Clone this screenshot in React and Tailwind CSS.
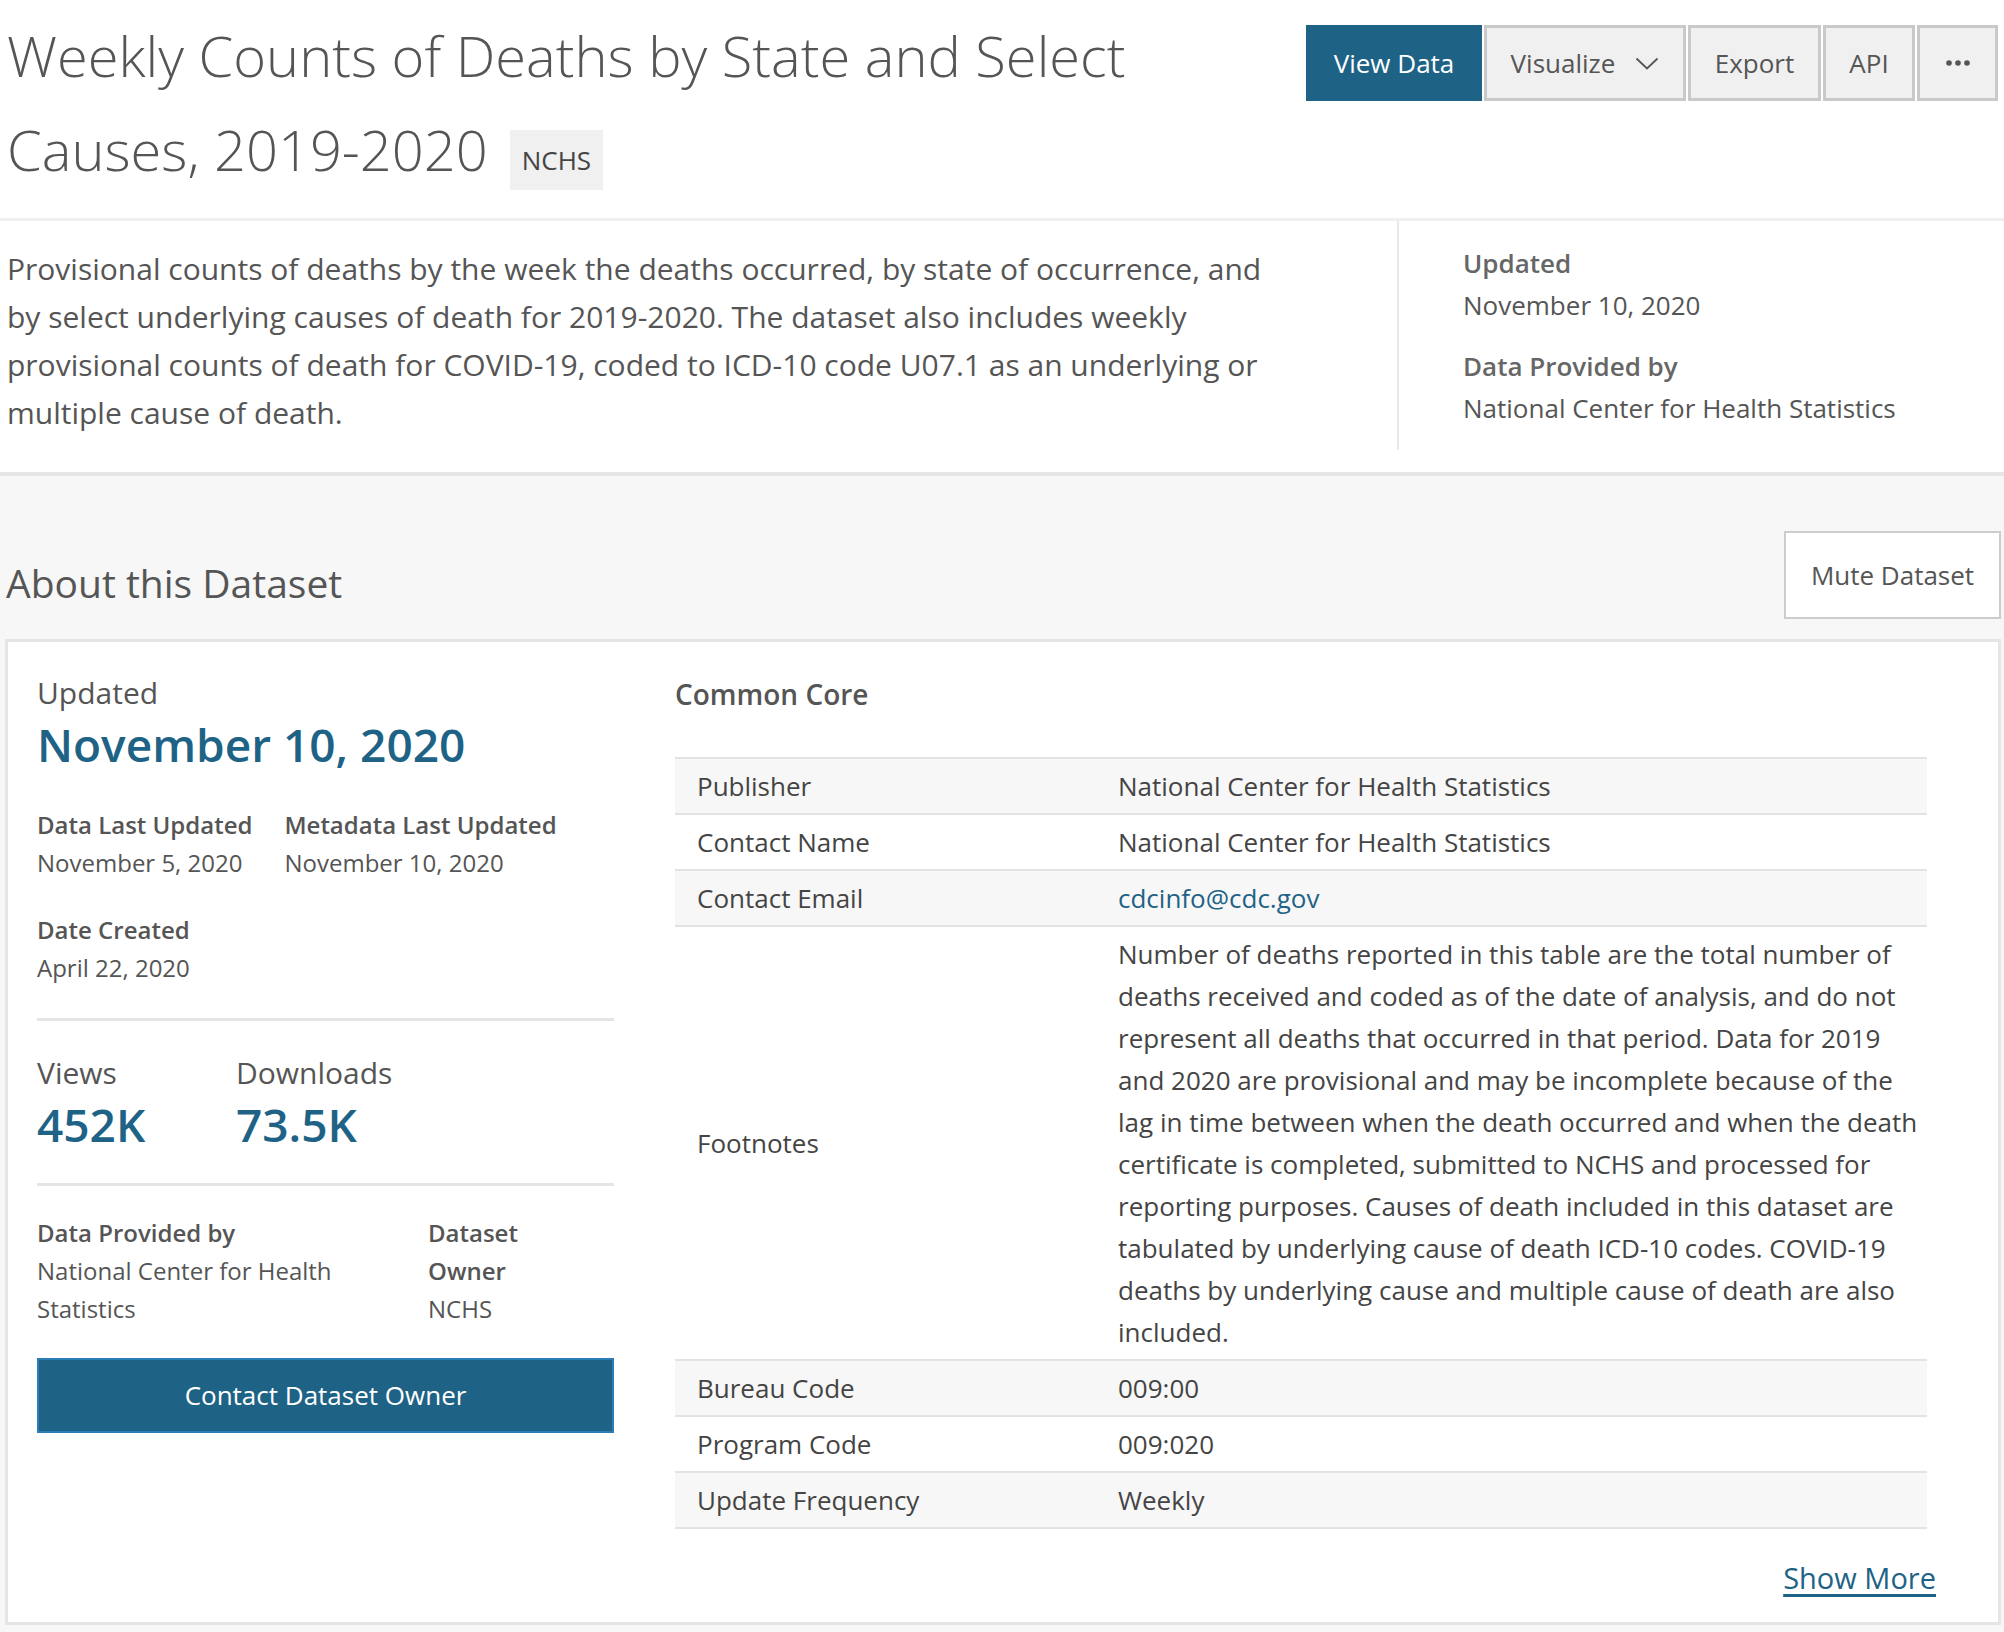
const footnote =
  'Number of deaths reported in this table are the total number of deaths received and coded as of the date of analysis, and do not represent all deaths that occurred in that period. Data for 2019 and 2020 are provisional and may be incomplete because of the lag in time between when the death occurred and when the death certificate is completed, submitted to NCHS and processed for reporting purposes. Causes of death included in this dataset are tabulated by underlying cause of death ICD-10 codes. COVID-19 deaths by underlying cause and multiple cause of death are also included.'

const rows = [
  ['Publisher', 'National Center for Health Statistics'],
  ['Contact Name', 'National Center for Health Statistics'],
  ['Contact Email', <a key="mail" className="text-[#1e6386]">cdcinfo@cdc.gov</a>],
  ['Footnotes', footnote],
  ['Bureau Code', '009:00'],
  ['Program Code', '009:020'],
  ['Update Frequency', 'Weekly'],
]

function Chevron() {
  return (
    <svg width="24" height="13" viewBox="0 0 24 13" fill="none">
      <polyline points="1.5,1.5 12,11.5 22.5,1.5" stroke="#555" strokeWidth="1.8" />
    </svg>
  )
}

function Dots() {
  return (
    <svg width="26" height="6" viewBox="0 0 26 6" fill="#555">
      <circle cx="4" cy="3" r="2.8" />
      <circle cx="13" cy="3" r="2.8" />
      <circle cx="22" cy="3" r="2.8" />
    </svg>
  )
}

export default function App() {
  return (
    <div className="min-h-screen bg-white font-['Open_Sans',sans-serif] text-[#555]">
      {/* title bar */}
      <header className="flex justify-between border-b-[3px] border-[#efefef] pl-[7px] pr-[6px] pt-[8px] pb-[22px]">
        <h1 className="max-w-[1250px] text-[56px] font-light leading-[94px]">
          Weekly Counts of Deaths by State and Select Causes, 2019-2020
          <span className="ml-[22px] inline-block h-[60px] bg-[#f0f0f0] px-[12px] align-[1px] text-[26px] font-normal leading-[60px] text-[#444]">
            NCHS
          </span>
        </h1>
        <div className="mt-[17px] flex h-[76px] shrink-0 gap-[2px] text-[26px]">
          <button className="w-[176px] bg-[#1e6386] text-white">View Data</button>
          <button className="flex w-[202px] items-center justify-center gap-[20px] border-[3px] border-[#c9c9c9] bg-[#f0f0f0]">
            Visualize <Chevron />
          </button>
          <button className="w-[133px] border-[3px] border-[#c9c9c9] bg-[#f0f0f0]">Export</button>
          <button className="w-[92px] border-[3px] border-[#c9c9c9] bg-[#f0f0f0]">API</button>
          <button className="flex w-[81px] items-center justify-center border-[3px] border-[#c9c9c9] bg-[#f0f0f0]">
            <Dots />
          </button>
        </div>
      </header>

      {/* description */}
      <section className="flex border-b-[4px] border-[#e6e6e6]">
        <div className="w-[1397px] shrink-0 pl-[7px] pt-[24px] pb-[35px]">
          <p className="max-w-[1285px] text-[30px] leading-[48px]">
            Provisional counts of deaths by the week the deaths occurred, by state of occurrence, and by select
            underlying causes of death for 2019-2020. The dataset also includes weekly provisional counts of death
            for COVID-19, coded to ICD-10 code U07.1 as an underlying or multiple cause of death.
          </p>
        </div>
        <div className="self-start border-l-2 border-[#e8e8e8] pl-[64px] pt-[21px] pb-[21px] text-[26px] leading-[42px]">
          <p className="font-semibold text-[#666]">Updated</p>
          <p>November 10, 2020</p>
          <p className="mt-[19px] font-semibold text-[#666]">Data Provided by</p>
          <p>National Center for Health Statistics</p>
        </div>
      </section>

      {/* about */}
      <section className="bg-[#f7f7f7] pl-[5px] pr-[3px] pt-[55px] pb-[9px]">
        <div className="flex items-end justify-between pb-[20px]">
          <h2 className="mb-[10px] pl-[1px] text-[39px] leading-[52px]">About this Dataset</h2>
          <button className="h-[88px] w-[217px] border-2 border-[#cccccc] bg-white text-[26px]">Mute Dataset</button>
        </div>

        <div className="flex border-[3px] border-[#e5e5e5] bg-white">
          <div className="w-[606px] shrink-0 pl-[29px] pt-[31px]">
            <p className="text-[30px] leading-[40px]">Updated</p>
            <p className="mt-[2px] text-[46px] font-semibold leading-[58px] text-[#1e6386]">November 10, 2020</p>
            <div className="mt-[33px] flex gap-[32px] text-[24px] leading-[38px]">
              <div>
                <p className="font-semibold">Data Last Updated</p>
                <p>November 5, 2020</p>
              </div>
              <div>
                <p className="font-semibold">Metadata Last Updated</p>
                <p>November 10, 2020</p>
              </div>
            </div>
            <div className="mt-[29px] text-[24px] leading-[38px]">
              <p className="font-semibold">Date Created</p>
              <p>April 22, 2020</p>
            </div>
            <div className="mt-[31px] flex border-t-[3px] border-[#e5e5e5] pt-[32px]">
              <div className="w-[199px]">
                <p className="text-[30px] leading-[40px]">Views</p>
                <p className="mt-[2px] text-[46px] font-semibold leading-[58px] text-[#1e6386]">452K</p>
              </div>
              <div>
                <p className="text-[30px] leading-[40px]">Downloads</p>
                <p className="mt-[2px] text-[46px] font-semibold leading-[58px] text-[#1e6386]">73.5K</p>
              </div>
            </div>
            <div className="mt-[30px] flex border-t-[3px] border-[#e5e5e5] pt-[28px] text-[24px] leading-[38px]">
              <div className="w-[391px] pr-[30px]">
                <p className="font-semibold">Data Provided by</p>
                <p>National Center for Health Statistics</p>
              </div>
              <div className="w-[150px]">
                <p className="font-semibold">Dataset Owner</p>
                <p>NCHS</p>
              </div>
            </div>
            <button className="mt-[30px] h-[75px] w-full border-2 border-[#2b7db5] bg-[#1e6386] text-[26px] text-white">
              Contact Dataset Owner
            </button>
          </div>

          <div className="flex-1 pl-[61px] pr-[62px] pt-[32px] pb-[24px]">
            <h3 className="text-[28px] font-semibold leading-[40px]">Common Core</h3>
            <div className="mr-[9px] mt-[43px] border-t-2 border-[#e3e3e3] text-[26px] leading-[42px] text-[#444]">
              {rows.map(([label, value], i) => (
                <div
                  key={label}
                  className={`grid grid-cols-[443px_1fr] items-center border-b-2 border-[#e3e3e3] py-[6px] ${i % 2 === 0 ? 'bg-[#f7f7f7]' : 'bg-white'}`}
                >
                  <div className="pl-[22px]">{label}</div>
                  <div className="pr-[4px]">{value}</div>
                </div>
              ))}
            </div>
            <div className="mt-[29px] text-right">
              <a className="text-[29px] leading-[40px] text-[#1e6386] underline decoration-[3px] underline-offset-[5px]">
                Show More
              </a>
            </div>
          </div>
        </div>
      </section>
    </div>
  )
}
